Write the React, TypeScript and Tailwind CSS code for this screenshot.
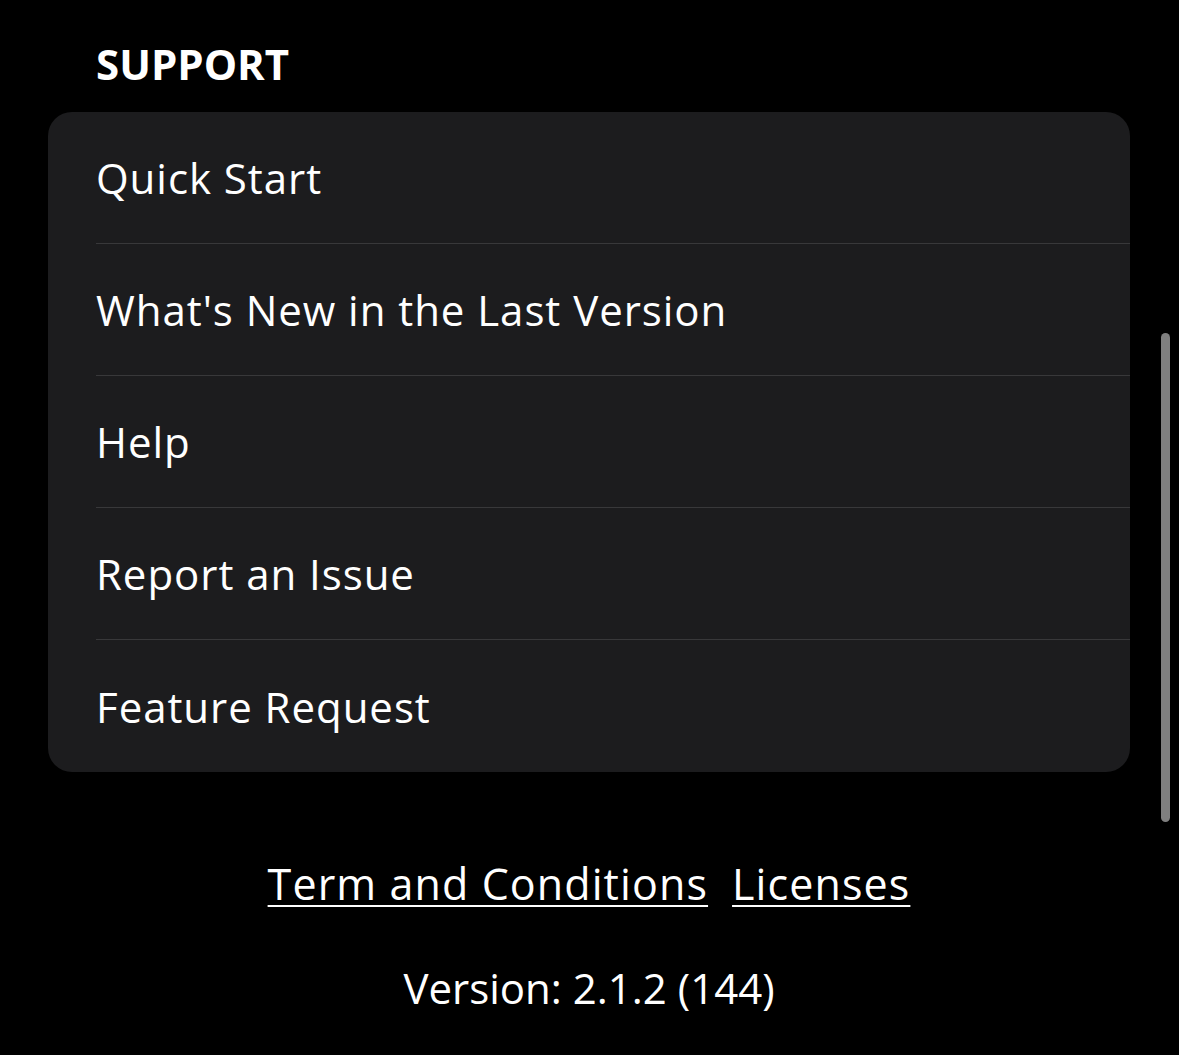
import React from "react";

const items = [
  "Quick Start",
  "What's New in the Last Version",
  "Help",
  "Report an Issue",
  "Feature Request",
];

export default function App() {
  return (
    <div
      className="relative w-full h-[1055px] overflow-hidden bg-black text-white pl-12 pr-[49px]"
      style={{ fontFamily: '"Open Sans", "Liberation Sans", sans-serif' }}
    >
      <div className="pl-12 pt-[40px] h-[112px] text-[42px] leading-[48px] font-bold">
        SUPPORT
      </div>
      <div className="rounded-[24px] bg-[#1c1c1e] overflow-hidden">
        {items.map((t, i) => (
          <div
            key={t}
            className={
              "ml-12 h-[132px] flex items-center text-[42px] tracking-[0.95px] " +
              (i < items.length - 1 ? "border-b border-[#38383a]" : "")
            }
          >
            {t}
          </div>
        ))}
      </div>
      <div className="mt-[88px] flex justify-center gap-[24px] text-[43px] leading-[48px] tracking-[1.1px]">
        <span className="underline underline-offset-[5px] decoration-2">Term and Conditions</span>
        <span className="underline underline-offset-[5px] decoration-2">Licenses</span>
      </div>
      <div className="mt-[56px] text-center text-[42px] leading-[48px]">Version: 2.1.2 (144)</div>
      <div className="absolute left-[1161px] top-[333px] w-[9px] h-[489px] rounded-full bg-[#7f7f7f]" />
    </div>
  );
}
